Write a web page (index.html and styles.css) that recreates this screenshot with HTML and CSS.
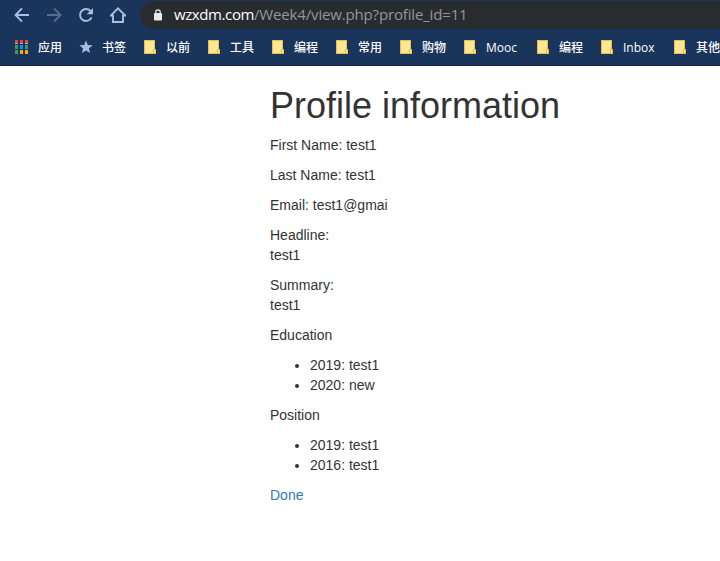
FILE: index.html
```html
<!DOCTYPE html>
<html lang="zh-CN">
<head>
<meta charset="utf-8">
<title>Profile information</title>
<link rel="stylesheet" href="styles.css">
</head>
<body>
<svg class="defs" aria-hidden="true">
  <symbol id="folder" viewBox="0 0 12 14">
    <path d="M0 0h11v9h1v5H0z" fill="#e8c048"/>
    <path d="M1 1h9v8H9v4H1z" fill="#ffe695"/>
    <path d="M10 10h1v3h-1z" fill="#ffe695"/>
  </symbol>
</svg>
<header class="browser">
  <div class="toolbar">
    <nav class="nav">
      <svg width="16" height="16" viewBox="0 0 16 16"><path d="M15 8H2M8 1.3 1.5 8 8 14.7"/></svg>
      <svg class="disabled" width="16" height="16" viewBox="0 0 16 16"><path d="M1 8h13M8 1.3 14.5 8 8 14.7"/></svg>
      <svg width="16" height="16" viewBox="0 0 16 16"><path d="M13.6 10.3A6 6 0 1 1 12.6 4.1"/><path class="solid" d="M15 1v6.3H8.7z"/></svg>
      <svg width="16" height="16" viewBox="0 0 16 16"><path d="M.8 8.6H3V15h10V8.6h2.2L8 1.4z"/></svg>
    </nav>
    <div class="omnibox">
      <svg width="8" height="12" viewBox="0 0 8 12"><rect y="4" width="8" height="7.5" rx="1" fill="#e8eaed"/><path d="M1.8 4.5V3a2.2 2.2 0 0 1 4.4 0v1.5" fill="none" stroke="#e8eaed" stroke-width="1.2"/></svg>
      <span class="url"><span class="host">wzxdm.com</span><span class="path">/Week4/view.php?profile_id=11</span></span>
    </div>
  </div>
  <div class="bookmarks">
    <div class="mark apps">
      <svg width="13" height="14" viewBox="0 0 13 14"><path fill="#f44336" d="M0 0h3v4H0zM5 0h3v4H5zM10 0h3v4h-3z"/><path fill="#34a058" d="M0 5h3v4H0zM0 10h3v4H0zM10 5h3v4h-3z"/><path fill="#2a85f5" d="M5 5h3v4H5z"/><path fill="#fbab05" d="M5 10h3v4H5zM10 10h3v4h-3z"/><path fill="#a3afc9" d="M0 3h3v1H0zM5 3h3v1H5zM10 3h3v1h-3z"/></svg>
      <span>应用</span>
    </div>
    <div class="mark star">
      <svg width="14" height="14" viewBox="0 0 14 14"><path fill="#a9bce0" d="m7 .5 1.8 4.4 4.8.4-3.7 3.1 1.2 4.7L7 10.6l-4.1 2.5 1.2-4.7L.4 5.3l4.8-.4z"/></svg>
      <span>书签</span>
    </div>
    <div class="mark"><svg width="12" height="14"><use href="#folder"/></svg><span>以前</span></div>
    <div class="mark"><svg width="12" height="14"><use href="#folder"/></svg><span>工具</span></div>
    <div class="mark"><svg width="12" height="14"><use href="#folder"/></svg><span>编程</span></div>
    <div class="mark"><svg width="12" height="14"><use href="#folder"/></svg><span>常用</span></div>
    <div class="mark"><svg width="12" height="14"><use href="#folder"/></svg><span>购物</span></div>
    <div class="mark wide"><svg width="12" height="14"><use href="#folder"/></svg><span class="mooc">Mooc</span></div>
    <div class="mark"><svg width="12" height="14"><use href="#folder"/></svg><span>编程</span></div>
    <div class="mark wide"><svg width="12" height="14"><use href="#folder"/></svg><span class="inbox">Inbox</span></div>
    <div class="mark"><svg width="12" height="14"><use href="#folder"/></svg><span>其他</span></div>
  </div>
</header>
<main class="container">
  <h1>Profile information</h1>
  <p>First Name: test1</p>
  <p>Last Name: test1</p>
  <p>Email: test1@gmai</p>
  <p>Headline:<br>test1</p>
  <p>Summary:<br>test1</p>
  <p>Education</p>
  <ul>
    <li>2019: test1</li>
    <li>2020: new</li>
  </ul>
  <p>Position</p>
  <ul>
    <li>2019: test1</li>
    <li>2016: test1</li>
  </ul>
  <a href="#">Done</a>
</main>
</body>
</html>
```
FILE: styles.css
```css
* { box-sizing: border-box; }

body {
  margin: 0;
  min-height: 561px;
  overflow: hidden;
  background: #fff;
  color: #333;
  font: 14px/20px "Liberation Sans", Arial, sans-serif;
}

.defs { display: none; }

.browser {
  height: 66px;
  overflow: hidden;
  background: #1a355b;
  border-bottom: 1px solid #10233c;
}

.toolbar {
  display: flex;
  height: 29px;
  padding-top: 1px;
}

.nav {
  display: flex;
  flex: none;
  align-items: center;
  gap: 16px;
  width: 140px;
  padding-left: 14px;
}

.nav svg {
  fill: none;
  stroke: #a9bfe2;
  stroke-width: 1.9;
}

.nav .disabled { stroke: #576d92; }
.nav .solid { fill: #a9bfe2; stroke: none; }

.omnibox {
  display: flex;
  flex: 1;
  align-items: center;
  gap: 12px;
  padding-left: 14px;
  background: #292c2f;
  border-radius: 14px 0 0 14px;
}

.url {
  padding-bottom: 2px;
  color: #92979c;
  font: 15px/26px "Open Sans", "Noto Sans", sans-serif;
  white-space: nowrap;
}

.host {
  color: #fff;
  letter-spacing: -0.4px;
}

.path { letter-spacing: -0.16px; }

.bookmarks {
  display: flex;
  align-items: center;
  height: 36px;
  padding-left: 15px;
  color: #fff;
  font: 500 12px/18px "Open Sans", "Noto Sans CJK SC", sans-serif;
  white-space: nowrap;
}

.mark {
  display: flex;
  flex: none;
  align-items: center;
  gap: 10px;
  width: 64px;
}

.mark span { padding-top: 2px; }
.mark.apps svg { margin-right: 0; }
.mark.star { width: 65px; }
.mark.star svg { margin-right: -1px; }
.mark.wide { width: 73px; }
.mark svg { flex: none; }

h1 {
  margin: 20px 0 9px;
  font-size: 36px;
  font-weight: 400;
  line-height: 1.1;
}

.container { padding-left: 270px; display: flow-root; }
p { margin: 0 0 10px; }
ul { margin: 0 0 10px; padding-left: 40px; }
a { color: #337ab7; text-decoration: none; }
```
